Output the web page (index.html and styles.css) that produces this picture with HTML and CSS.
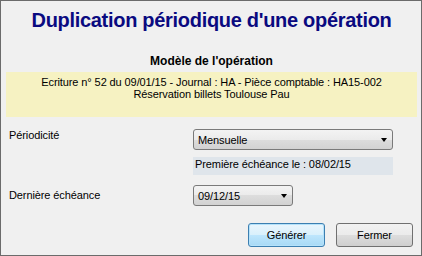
FILE: index.html
```html
<!DOCTYPE html>
<html lang="fr">
<head>
    <meta charset="UTF-8">
    <meta name="viewport" content="width=device-width, initial-scale=1.0">
    <title>Duplication périodique d'une opération</title>
    <link rel="stylesheet" href="styles.css">
</head>
<body>
    <div class="dialog">
        <h1 class="title">Duplication périodique d'une opération</h1>
        <h2 class="model-head">Modèle de l'opération</h2>
        <div class="model-info">
            <p>Ecriture n° 52 du 09/01/15 - Journal : HA - Pièce comptable : HA15-002</p>
            <p>Réservation billets Toulouse Pau</p>
        </div>

        <div class="row row-period">
            <label class="label">Périodicité</label>
            <div class="field">
                <div class="combo combo-wide">
                    <span>Mensuelle</span>
                    <span class="arrow"></span>
                </div>
                <div class="first-due">Première échéance le : 08/02/15</div>
            </div>
        </div>

        <div class="row row-last">
            <label class="label">Dernière échéance</label>
            <div class="combo combo-short">
                <span>09/12/15</span>
                <span class="arrow"></span>
            </div>
        </div>

        <div class="actions">
            <button type="button" class="btn btn-default">Générer</button>
            <button type="button" class="btn">Fermer</button>
        </div>
    </div>
</body>
</html>
```

FILE: styles.css
```css
* {
    padding: 0;
    margin: 0;
    box-sizing: border-box;
}
body {
    font-family: "Liberation Sans", Arial, sans-serif;
    font-size: 11px;
    color: #000;
    background: #f0f0f0;
}
.dialog {
    width: 422px;
    height: 256px;
    border: 1px solid #6b6b6b;
    background: #f0f0f0;
    padding: 7px 4px 0 5px;
}
.title {
    font-size: 20px;
    line-height: 24px;
    letter-spacing: -0.3px;
    font-weight: bold;
    color: #0a0a80;
    text-align: center;
}
.model-head {
    margin-top: 23px;
    font-size: 12px;
    line-height: 13px;
    font-weight: bold;
    text-align: center;
}
.model-info {
    margin-top: 4px;
    height: 45px;
    padding-top: 4px;
    background: #f6f2c2;
    text-align: center;
    line-height: 12px;
    letter-spacing: -0.1px;
}
.row {
    display: flex;
    align-items: flex-start;
}
.label {
    width: 187px;
    padding-left: 3px;
    line-height: 13px;
    letter-spacing: -0.1px;
}
.row-period {
    margin-top: 12px;
}
.row-last {
    margin-top: 10px;
    align-items: center;
}
.field {
    width: 200px;
}
.combo {
    display: flex;
    align-items: center;
    justify-content: space-between;
    height: 21px;
    padding: 0 4px 0 4px;
    border: 1px solid #7a7a7a;
    border-radius: 3px;
    background: linear-gradient(#f3f3f3, #ebebeb 50%, #dddddd 50%, #d2d2d2);
    letter-spacing: -0.1px;
}
.combo-wide {
    width: 200px;
}
.combo-short {
    width: 100px;
}
.arrow {
    width: 0;
    height: 0;
    border-left: 3.5px solid transparent;
    border-right: 3.5px solid transparent;
    border-top: 4px solid #000;
    margin-right: 1px;
}
.first-due {
    margin-top: 7px;
    height: 18px;
    padding: 1px 0 0 2px;
    line-height: 13px;
    background: #dfe5eb;
    letter-spacing: -0.1px;
}
.actions {
    display: flex;
    justify-content: flex-end;
    gap: 11px;
    margin-top: 17px;
    padding-right: 4px;
}
.btn {
    width: 77px;
    height: 24px;
    font-family: "Liberation Sans", Arial, sans-serif;
    font-size: 11px;
    letter-spacing: -0.1px;
    color: #000;
    border: 1px solid #707070;
    border-radius: 3px;
    background: linear-gradient(#f2f2f2, #ebebeb 50%, #dddddd 50%, #cfcfcf);
}
.btn-default {
    border-color: #3c7fb1;
    box-shadow: inset 0 0 0 1px #b5e2fa;
    background: linear-gradient(#eaf6fd, #d9f0fc 50%, #bee6fd 50%, #a7d9f5);
}
```
